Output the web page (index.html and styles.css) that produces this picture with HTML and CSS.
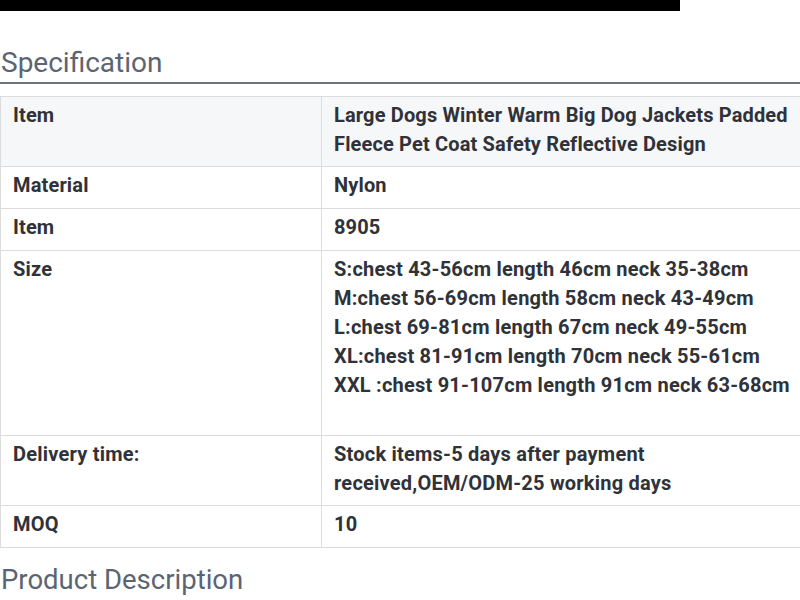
FILE: index.html
```html
<!DOCTYPE html>
<html>
<head>
<meta charset="utf-8">
<link rel="stylesheet" href="styles.css">
</head>
<body>
<div class="topbar"></div>
<h2 class="section-title">Specification</h2>
<table class="spec">
  <tr class="shade">
    <td class="key">Item</td>
    <td class="val">Large Dogs Winter Warm Big Dog Jackets Padded<br>Fleece Pet Coat Safety Reflective Design</td>
  </tr>
  <tr class="single">
    <td class="key">Material</td>
    <td class="val">Nylon</td>
  </tr>
  <tr class="single">
    <td class="key">Item</td>
    <td class="val">8905</td>
  </tr>
  <tr class="tall">
    <td class="key cond">Size</td>
    <td class="val cond">S:chest 43-56cm length 46cm neck 35-38cm<br>M:chest 56-69cm length 58cm neck 43-49cm<br>L:chest 69-81cm length 67cm neck 49-55cm<br>XL:chest 81-91cm length 70cm neck 55-61cm<br>XXL :chest 91-107cm length 91cm neck 63-68cm<br>&nbsp;</td>
  </tr>
  <tr>
    <td class="key cond">Delivery time:</td>
    <td class="val cond">Stock items-5 days after payment<br>received,OEM/ODM-25 working days</td>
  </tr>
  <tr class="single">
    <td class="key cond">MOQ</td>
    <td class="val cond">10</td>
  </tr>
</table>
<h2 class="section-title plain">Product Description</h2>
</body>
</html>
```
FILE: styles.css
```css
html, body {
  margin: 0;
  padding: 0;
  background: #fff;
  overflow: hidden;
}
body {
  width: 800px;
  font-family: Roboto, "Liberation Sans", sans-serif;
}
.topbar {
  width: 680px;
  height: 11px;
  background: #000;
}
.section-title {
  margin: 34px 0 0 0;
  padding: 0 0 1px 1px;
  font-size: 28px;
  font-weight: 400;
  line-height: 36px;
  color: #5b6473;
  border-bottom: 2px solid #6b7380;
}
.section-title.plain {
  margin-top: 14px;
  font-size: 27.5px;
  border-bottom: none;
}
.spec {
  margin-top: 12px;
  border-collapse: collapse;
  width: 812px;
  color: #2f3238;
  font-size: 20px;
  font-weight: 700;
  line-height: 29px;
  letter-spacing: 0.15px;
}
.spec td {
  border: 1px solid #dcdcdc;
  padding: 4px 12px 7px 12px;
  vertical-align: top;
  text-align: left;
}
.spec .single td {
  padding-bottom: 8px;
}
.spec .tall td {
  padding-bottom: 6px;
}
.spec .key {
  width: 296px;
}
.spec .shade td {
  background: #f6f7f9;
}
.spec .cond {
  letter-spacing: 0.22px;
}
```
